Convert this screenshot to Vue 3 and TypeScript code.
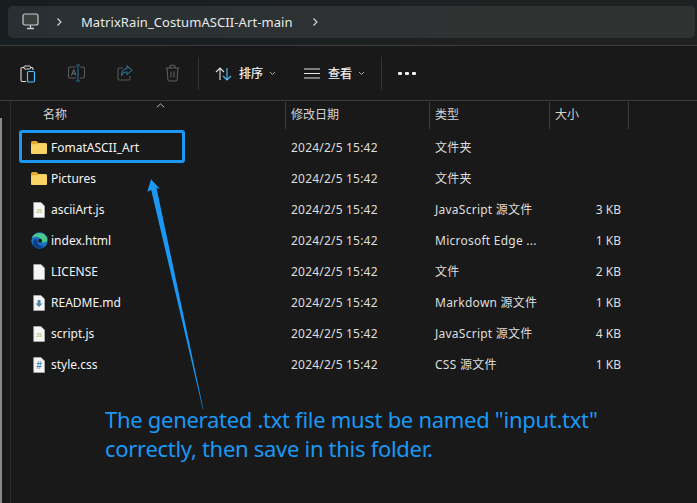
<script setup lang="ts">
interface Row { name: string; date: string; type: string; size: string; icon: string }
const rows: Row[] = [
  { name: 'FomatASCII_Art', date: '2024/2/5 15:42', type: '文件夹', size: '', icon: 'folder' },
  { name: 'Pictures', date: '2024/2/5 15:42', type: '文件夹', size: '', icon: 'folder' },
  { name: 'asciiArt.js', date: '2024/2/5 15:42', type: 'JavaScript 源文件', size: '3 KB', icon: 'js' },
  { name: 'index.html', date: '2024/2/5 15:42', type: 'Microsoft Edge ...', size: '1 KB', icon: 'edge' },
  { name: 'LICENSE', date: '2024/2/5 15:42', type: '文件', size: '2 KB', icon: 'blank' },
  { name: 'README.md', date: '2024/2/5 15:42', type: 'Markdown 源文件', size: '1 KB', icon: 'md' },
  { name: 'script.js', date: '2024/2/5 15:42', type: 'JavaScript 源文件', size: '4 KB', icon: 'js' },
  { name: 'style.css', date: '2024/2/5 15:42', type: 'CSS 源文件', size: '1 KB', icon: 'css' },
]
</script>

<template>
  <div class="win">
    <header class="top">
      <div class="crumb">
        <svg class="pc" width="17" height="17" viewBox="0 0 17 17" fill="none">
          <rect x="1" y="1" width="15" height="11" rx="2" fill="#3a3f40" stroke="#c9cccc" stroke-width="1.2" />
          <path d="M8.500 12v3M5 15.500h7" stroke="#c9cccc" stroke-width="1.300" />
        </svg>
        <svg class="chev c1" width="7" height="10" viewBox="0 0 7 10" fill="none"><path d="M1.500 1.500 5 5 1.500 8.500" stroke="#d8d8d8" stroke-width="1.100" /></svg>
        <span class="path">MatrixRain_CostumASCII-Art-main</span>
        <svg class="chev c2" width="7" height="10" viewBox="0 0 7 10" fill="none"><path d="M1.500 1.500 5 5 1.500 8.500" stroke="#d8d8d8" stroke-width="1.100" /></svg>
      </div>
    </header>

    <section class="tools">
      <svg class="ti t1" width="16" height="18" viewBox="0 0 16 18" fill="none">
        <path d="M10.500 2.500h1.300a1.200 1.200 0 0 1 1.200 1.200V5M4 2.500H2.200A1.200 1.200 0 0 0 1 3.700v11.600a1.200 1.200 0 0 0 1.200 1.200H6" stroke="#dcdcdc" stroke-width="1.100" />
        <rect x="4" y="1" width="6.500" height="3" rx="1" stroke="#dcdcdc" stroke-width="1" />
        <rect x="7.500" y="6.500" width="7" height="10.500" rx="1.200" stroke="#4cc2ff" stroke-width="1.200" />
      </svg>
      <svg class="ti t2" width="17" height="18" viewBox="0 0 17 18" fill="none">
        <path d="M8 3H2.200A1.700 1.700 0 0 0 .5 4.700v7.600A1.700 1.700 0 0 0 2.200 14H8M12 3h2.800a1.700 1.700 0 0 1 1.700 1.700v7.600a1.700 1.700 0 0 1-1.700 1.700H12" stroke="#55595a" stroke-width="1.100" />
        <path d="M8 1h4M8 17h4M10 1v16" stroke="#2e6a8a" stroke-width="1.100" />
        <path d="M3.500 11.500 5.700 5.500 8 11.500M4.300 9.700h2.800" stroke="#5a7480" stroke-width="1" />
      </svg>
      <svg class="ti t3" width="16" height="16" viewBox="0 0 16 16" fill="none">
        <path d="M6 3H2.500A1.500 1.500 0 0 0 1 4.500v9A1.500 1.500 0 0 0 2.500 15h9a1.500 1.500 0 0 0 1.500-1.500V11" stroke="#555858" stroke-width="1.100" />
        <path d="M10 1l5 4.300-5 4.300V7C7.500 7 5.500 8 4.500 11 4.500 7 6.500 3.800 10 3.600z" stroke="#2f6886" stroke-width="1.100" />
      </svg>
      <svg class="ti t4" width="15" height="18" viewBox="0 0 15 18" fill="none">
        <path d="M.5 4h14M5 4V2.500A1.200 1.200 0 0 1 6.200 1.300h2.600A1.200 1.200 0 0 1 10 2.500V4M2 4l.9 11.500A1.600 1.600 0 0 0 4.500 17h6a1.600 1.600 0 0 0 1.600-1.500L13 4M6 7.500v6M9 7.500v6" stroke="#5b5d5e" stroke-width="1.100" />
      </svg>
      <i class="vsep s1"></i>
      <svg class="ti t5" width="17" height="14" viewBox="0 0 17 14" fill="none">
        <path d="M5 13V1.500M1 5l4-4 4 4" stroke="#e2e2e2" stroke-width="1.100" />
        <path d="M12 1v11.500M8 9l4 4 4-4" stroke="#4cc2ff" stroke-width="1.100" />
      </svg>
      <span class="tl l1">排序</span>
      <svg class="ti d1" width="7" height="5" viewBox="0 0 7 5" fill="none"><path d="M1 1l2.500 2.500L6 1" stroke="#a8a8a8" stroke-width="1" /></svg>
      <svg class="ti t6" width="16" height="11" viewBox="0 0 16 11" fill="none"><path d="M0 1h16M0 5.500h16M0 10h16" stroke="#e6e6e6" stroke-width="1" /></svg>
      <span class="tl l2">查看</span>
      <svg class="ti d2" width="7" height="5" viewBox="0 0 7 5" fill="none"><path d="M1 1l2.500 2.500L6 1" stroke="#a8a8a8" stroke-width="1" /></svg>
      <i class="vsep s2"></i>
      <span class="dots"><b></b><b></b><b></b></span>
    </section>

    <section class="list">
      <div class="head">
        <svg class="sort" width="9" height="5" viewBox="0 0 9 5" fill="none"><path d="M.8 4.200 4.500 1l3.700 3.200" stroke="#b5b5b5" stroke-width="1" /></svg>
        <span class="h name">名称</span>
        <span class="h date">修改日期</span>
        <span class="h type">类型</span>
        <span class="h size">大小</span>
      </div>
      <div class="rows">
        <div v-for="r in rows" :key="r.name" class="row">
          <span class="ic">
            <svg v-if="r.icon === 'folder'" width="16" height="13" viewBox="0 0 16 13">
              <path d="M0 1.500A1.500 1.500 0 0 1 1.500 0h4L7.500 2h7A1.500 1.500 0 0 1 16 3.500v8A1.500 1.500 0 0 1 14.500 13h-13A1.500 1.500 0 0 1 0 11.500z" fill="#e3a92e" />
              <path d="M0 4.500A1.200 1.200 0 0 1 1.200 3.300h4.600L7.500 2.200h7A1.500 1.500 0 0 1 16 3.700v7.800a1.500 1.500 0 0 1-1.500 1.500h-13A1.500 1.500 0 0 1 0 11.500z" fill="#fad366" />
            </svg>
            <svg v-else-if="r.icon === 'edge'" width="17" height="17" viewBox="0 0 17 17">
              <circle cx="8.500" cy="8.500" r="8.200" fill="#1a73c4" />
              <path d="M1 6C3 0 13 -1 16 5.500c1.300 3 -1 5 -3.500 5 -1.800 0 -2.700-1 -2.200-2C10 5 5 3.500 1 6z" fill="#49c98a" />
              <path d="M6.300 9.500c0 3 2.700 5 6.500 4.300C10.500 17 5.500 17.500 3 14.500 1.300 12.500 1.500 8.500 4 7c1.300-.6 2.300 1 2.300 2.500z" fill="#0d3f8f" />
              <circle cx="9.200" cy="8.700" r="1.900" fill="#191919" />
            </svg>
            <svg v-else width="12" height="16" viewBox="0 0 12 16">
              <path d="M.7.500h7.300l3.500 3.500v11.500H.7z" fill="#f6f6f6" stroke="#bdbdbd" stroke-width=".6" />
              <text v-if="r.icon === 'js'" x="6" y="11.300" text-anchor="middle" class="js">JS</text>
              <path v-if="r.icon === 'md'" d="M4.500 5h3v3.500h2L6 12 2.500 8.500h2z" fill="#4b87a8" />
              <text v-if="r.icon === 'css'" x="6" y="12.300" text-anchor="middle" class="hash">#</text>
            </svg>
          </span>
          <span class="cell name">{{ r.name }}</span>
          <span class="cell date">{{ r.date }}</span>
          <span class="cell type">{{ r.type }}</span>
          <span class="cell size">{{ r.size }}</span>
        </div>
      </div>
    </section>

    <i class="edge-strip"></i>
    <div class="mark"></div>
    <svg class="arrow" width="697" height="503" viewBox="0 0 697 503">
      <path d="M151 179.300 160 189 156.500 187.800 203.300 409H202.800L151.200 190 147.300 191.700z" fill="#1a98f4" />
    </svg>
    <p class="note">The generated .txt file must be named "input.txt"<br />correctly, then save in this folder.</p>
  </div>
</template>

<style>
html, body { margin: 0; background: #191919; }
</style>

<style scoped>
.win {
  position: relative;
  width: 697px;
  height: 503px;
  overflow: hidden;
  background: #191919;
  color: #f0f0f0;
  font-family: "Noto Sans", "Noto Sans CJK SC", sans-serif;
  font-size: 12px;
}
.top {
  box-sizing: border-box;
  height: 46px;
  padding: 6px 2px 0 8px;
  background: linear-gradient(90deg, #161e20, #1f2021 70%);
  border-bottom: 1px solid #3c3c3c;
}
.crumb {
  position: relative;
  height: 32px;
  border-radius: 5px;
  background: linear-gradient(90deg, #283033, #303232 70%);
}
.pc { position: absolute; left: 14px; top: 7px; }
.chev { position: absolute; top: 11px; }
.c1 { left: 48px; }
.c2 { left: 304px; }
.path {
  position: absolute;
  left: 73px;
  top: 7px;
  font-size: 13px;
  line-height: 18px;
  letter-spacing: .08px;
  color: #e8e8e8;
  white-space: nowrap;
}
.tools {
  position: relative;
  box-sizing: border-box;
  height: 55px;
  border-bottom: 1px solid #3c3c3c;
}
.ti { position: absolute; }
.t1 { left: 20px; top: 19px; }
.t2 { left: 68px; top: 18px; }
.t3 { left: 117px; top: 19px; }
.t4 { left: 165px; top: 18px; }
.t5 { left: 215px; top: 21px; }
.d1 { left: 269px; top: 25px; }
.t6 { left: 304px; top: 22px; }
.d2 { left: 358px; top: 25px; }
.tl { position: absolute; top: 19px; font-size: 12px; line-height: 18px; color: #f4f4f4; -webkit-text-stroke: .2px #f4f4f4; }
.l1 { left: 239px; }
.l2 { left: 328px; }
.vsep { position: absolute; top: 11px; width: 1px; height: 33px; background: #333; }
.s1 { left: 198px; }
.s2 { left: 381px; }
.dots { position: absolute; left: 398px; top: 26px; display: flex; gap: 3px; }
.dots b { width: 4px; height: 3px; border-radius: 1px; background: #f0f0f0; }
.list { position: relative; height: 402px; margin-left: 11px; }
.head { position: relative; height: 27px; }
.sort { position: absolute; left: 145px; top: 2px; }
.h { position: absolute; top: 5px; line-height: 18px; color: #d4d4d4; }
.h.name { left: 32px; }
.h.date { left: 280px; }
.h.type { left: 424px; }
.h.size { left: 544px; }
.h.date::before, .h.type::before, .h.size::before, .h.size::after {
  content: "";
  position: absolute;
  left: -6px;
  top: -4px;
  width: 1px;
  height: 27px;
  background: #3d3d3d;
}
.h.size::after { left: 73px; }
.rows { display: flex; flex-direction: column; padding-top: 4px; }
.row { position: relative; height: 31px; line-height: 31px; white-space: nowrap; }
.ic { position: absolute; left: 18px; top: 0; bottom: 0; width: 20px; display: flex; align-items: center; justify-content: center; }
.cell { position: absolute; top: 0; }
.cell.name { left: 40px; color: #f4f4f4; }
.cell.date { left: 280px; letter-spacing: .2px; color: #dedede; }
.cell.type { left: 424px; letter-spacing: .25px; color: #dedede; }
.cell.size { right: 76px; color: #dedede; }
.js { font: 700 5px "Liberation Sans", sans-serif; fill: #c8c060; }
.hash { font: 700 10px "Liberation Sans", sans-serif; fill: #4b87a8; }
.edge-strip {
  position: absolute;
  left: 0;
  top: 118px;
  bottom: 0;
  width: 2px;
  background: #8a8a8a;
}
.list::before {
  content: "";
  position: absolute;
  left: -1px;
  top: 0;
  bottom: 0;
  width: 1px;
  background: #2a2a2a;
}
.mark {
  position: absolute;
  left: 19px;
  top: 130px;
  box-sizing: border-box;
  width: 166px;
  height: 33px;
  border: 3px solid #1a98f4;
  border-radius: 3px;
}
.arrow { position: absolute; left: 0; top: 0; pointer-events: none; }
.note {
  position: absolute;
  left: 105px;
  top: 405px;
  margin: 0;
  font-size: 22px;
  line-height: 29px;
  letter-spacing: -.29px;
  color: #1a98f4;
  white-space: nowrap;
}
</style>
